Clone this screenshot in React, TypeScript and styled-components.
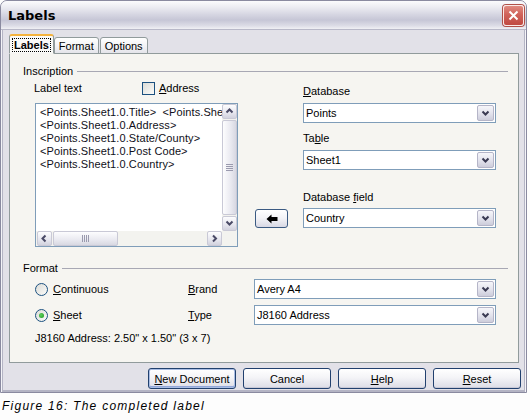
import React from 'react'
import styled, { createGlobalStyle } from 'styled-components'

const GlobalStyle = createGlobalStyle`
  body {
    margin: 0;
    background: #fdfdfd;
    font-family: "Liberation Sans", Arial, sans-serif;
    font-size: 11px;
    color: #000;
  }
`

const Window = styled.div`
  width: 527px;
  height: 393px;
  box-sizing: border-box;
  border: 1px solid #8a8aa0;
  border-radius: 7px 7px 0 0;
  background: #e2e1e8;
  box-shadow: inset 1px 0 0 #f4f4f8, inset 2px 0 0 #b4b4c4, inset -1px 0 0 #f4f4f8, inset -2px 0 0 #b4b4c4, inset 0 -2px 0 #b4b4c4;
  display: flex;
  flex-direction: column;
  overflow: hidden;
`

const TitleBar = styled.div`
  height: 28px;
  flex: none;
  display: flex;
  align-items: center;
  justify-content: space-between;
  padding: 0 2px 0 7px;
  background: linear-gradient(180deg, #fbfbfd 0%, #ececf2 22%, #d6d6e2 48%, #c6c6d6 68%, #dcdce6 88%, #f0f0f4 100%);
  border-bottom: 1px solid #b8b8c8;
`

const Title = styled.span`
  font-family: "DejaVu Sans", sans-serif;
  font-weight: bold;
  font-size: 13px;
  color: #000;
`

const CloseBtn = styled.div`
  width: 21px;
  height: 21px;
  box-sizing: border-box;
  border: 1px solid #fbe9e6;
  border-radius: 3px;
  background: linear-gradient(180deg, #e08a80 0%, #d0625a 45%, #c04a42 100%);
  display: flex;
  align-items: center;
  justify-content: center;
  box-shadow: 0 0 0 1px #b05048;
`

const Body = styled.div`
  flex: 1;
  display: flex;
  flex-direction: column;
  padding: 4px 7px 4px 8px;
`

const TabStrip = styled.div`
  display: flex;
  align-items: flex-end;
  height: 20px;
  margin-bottom: -1px;
  position: relative;
  z-index: 1;
`

const Tab = styled.div<{ $active?: boolean }>`
  box-sizing: border-box;
  height: ${p => (p.$active ? 20 : 17)}px;
  padding: 0 ${p => (p.$active ? 3 : 4)}px;
  margin-right: ${p => (p.$active ? 0 : 1)}px;
  display: flex;
  align-items: center;
  border: 1px solid #919b9c;
  border-bottom: ${p => (p.$active ? '1px solid #f6f5f2' : '1px solid #919b9c')};
  border-top: ${p => (p.$active ? '2px solid #f5b33c' : '1px solid #919b9c')};
  border-radius: 3px 3px 0 0;
  background: ${p => (p.$active ? '#fafaf8' : 'linear-gradient(180deg, #ffffff 0%, #f1f1f4 60%, #e4e4ea 100%)')};
  font-weight: ${p => (p.$active ? 'bold' : 'normal')};
`

const FocusText = styled.span`
  outline: 1px dotted #000;
  padding: 0 1px;
`

const TabPanel = styled.div`
  height: 310px;
  box-sizing: border-box;
  border: 1px solid #919b9c;
  background: #f6f5f1;
  padding: 10px 10px 0 13px;
`

const GroupHeader = styled.div`
  display: flex;
  align-items: center;
  gap: 4px;
  height: 14px;
  line-height: 14px;
`

const GroupLine = styled.div`
  flex: 1;
  height: 1px;
  background: #a8a8b4;
`

const Inscription = styled.div`
  display: flex;
  margin-top: 3px;
  padding-left: 12px;
`

const LeftCol = styled.div`
  width: 203px;
  display: flex;
  flex-direction: column;
`

const HeaderRow = styled.div`
  display: flex;
  align-items: center;
  height: 14px;
`

const FieldLabel = styled.span<{ $w?: number }>`
  display: inline-block;
  line-height: 14px;
  width: ${p => (p.$w ? `${p.$w}px` : 'auto')};
`

const CheckBox = styled.span`
  width: 13px;
  height: 13px;
  box-sizing: border-box;
  border: 1px solid #1c5180;
  background: linear-gradient(135deg, #dcdcd7 0%, #fbfbf9 100%);
  margin-right: 4px;
`

const TextBox = styled.div`
  margin-top: 8px;
  width: 203px;
  height: 144px;
  box-sizing: border-box;
  border: 1px solid #7f9db9;
  background: #fff;
  display: grid;
  grid-template-columns: 186px 15px;
  grid-template-rows: 1fr 15px;
`

const TextLines = styled.div`
  padding: 2px 0 0 4px;
  overflow: hidden;
  white-space: pre;
  line-height: 13px;
  letter-spacing: 0.1px;
  color: #101020;
`

const VScroll = styled.div`
  display: flex;
  flex-direction: column;
  background: #f3f3ef;
`

const HScroll = styled.div`
  display: flex;
  background: #f3f3ef;
  padding-left: 1px;
`

const Corner = styled.div`
  background: #f3f3ef;
`

const ScrollBtn = styled.div`
  width: 15px;
  height: 15px;
  flex: none;
  box-sizing: border-box;
  border: 1px solid #c9c9d6;
  border-radius: 2px;
  background: linear-gradient(180deg, #fdfdfe 0%, #e6e6ee 60%, #d2d2de 100%);
  display: flex;
  align-items: center;
  justify-content: center;
`

const Thumb = styled.div<{ $horizontal?: boolean }>`
  box-sizing: border-box;
  border: 1px solid #c9c9d6;
  border-radius: 2px;
  background: ${p =>
    p.$horizontal
      ? 'linear-gradient(180deg, #fdfdfe 0%, #e9e9f0 60%, #d8d8e2 100%)'
      : 'linear-gradient(90deg, #fdfdfe 0%, #e9e9f0 60%, #d8d8e2 100%)'};
  display: flex;
  align-items: center;
  justify-content: center;
  ${p => (p.$horizontal ? 'width: 65px; margin: 0 1px;' : 'flex: 1; margin: 1px 0;')}
`

const Grip = styled.div<{ $horizontal?: boolean }>`
  width: 7px;
  height: 7px;
  background: ${p =>
    p.$horizontal
      ? 'repeating-linear-gradient(90deg, #9a9aae 0 1px, transparent 1px 2px)'
      : 'repeating-linear-gradient(180deg, #9a9aae 0 1px, transparent 1px 2px)'};
`

const Spacer = styled.div`
  flex: 1;
`

const MiddleCol = styled.div`
  width: 33px;
  margin-left: 17px;
  padding-top: 128px;
`

const ArrowBtn = styled.div`
  width: 33px;
  height: 19px;
  box-sizing: border-box;
  border: 1px solid #3b5a82;
  border-radius: 3px;
  background: linear-gradient(180deg, #ffffff 0%, #f2f2f6 50%, #d8d8e4 100%);
  display: flex;
  align-items: center;
  justify-content: center;
`

const RightCol = styled.div`
  width: 193px;
  margin-left: 15px;
  padding-top: 3px;
  display: flex;
  flex-direction: column;
`

const Select = styled.div<{ $mt?: number }>`
  margin-top: ${p => p.$mt ?? 0}px;
  height: 20px;
  box-sizing: border-box;
  border: 1px solid #7f9db9;
  background: #fff;
  display: flex;
  align-items: center;
  padding: 0 1px 0 2px;
`

const SelectText = styled.span`
  flex: 1;
  white-space: nowrap;
`

const DropBtn = styled.div`
  width: 17px;
  height: 16px;
  box-sizing: border-box;
  border: 1px solid #b5b5c8;
  border-radius: 2px;
  background: linear-gradient(180deg, #f6f6fa 0%, #e2e2ec 55%, #cdcddb 100%);
  display: flex;
  align-items: center;
  justify-content: center;
`

const Spaced = styled.div<{ $mt: number }>`
  margin-top: ${p => p.$mt}px;
`

const FormatGrid = styled.div`
  margin-top: 4px;
  padding-left: 12px;
  display: grid;
  grid-template-columns: 153px 66px 242px;
  grid-auto-rows: 20px;
  row-gap: 6px;
  align-items: center;
`

const RadioRow = styled.div`
  display: flex;
  align-items: center;
  gap: 5px;
`

const Radio = styled.span<{ $checked?: boolean }>`
  width: 13px;
  height: 13px;
  box-sizing: border-box;
  border-radius: 50%;
  border: 1px solid #1c5180;
  background: linear-gradient(135deg, #dcdcd7 0%, #fbfbf9 100%);
  display: flex;
  align-items: center;
  justify-content: center;
  &::after {
    content: '';
    display: ${p => (p.$checked ? 'block' : 'none')};
    width: 5px;
    height: 5px;
    border-radius: 50%;
    background: radial-gradient(circle at 40% 40%, #5ed05e, #1f961f);
  }
`

const Info = styled.div`
  margin-top: 6px;
  padding-left: 12px;
  line-height: 14px;
`

const ButtonRow = styled.div`
  display: flex;
  justify-content: flex-end;
  gap: 7px;
  margin-top: 5px;
  margin-right: -2px;
`

const Button = styled.div<{ $default?: boolean }>`
  width: 88px;
  height: 21px;
  box-sizing: border-box;
  border: 1px solid #21406e;
  border-radius: 3px;
  background: linear-gradient(180deg, #ffffff 0%, #f4f4f7 45%, #dcdce6 100%);
  box-shadow: ${p => (p.$default ? 'inset 0 0 0 1px #a9bde4, inset 0 -1px 0 1px #92a6d8' : 'inset 0 -1px 0 #c9c9d6')};
  display: flex;
  align-items: center;
  justify-content: center;
`

const Caption = styled.div`
  margin-top: 6px;
  padding-left: 2px;
  font-family: "Liberation Sans", Arial, sans-serif;
  font-style: italic;
  font-size: 12px;
  letter-spacing: 1.25px;
  line-height: 14px;
  color: #000;
`

const U = ({ children }: { children: React.ReactNode }) => <u>{children}</u>

const Chevron = ({ dir }: { dir: 'up' | 'down' | 'left' | 'right' }) => {
  const pts = {
    up: '1.5,5.5 4.5,2.5 7.5,5.5',
    down: '1.5,2.5 4.5,5.5 7.5,2.5',
    left: '5.5,1.5 2.5,4.5 5.5,7.5',
    right: '3,1.5 6,4.5 3,7.5',
  }[dir]
  return (
    <svg width="9" height="9" viewBox="0 0 9 9">
      <polyline points={pts} fill="none" stroke="#4a4a66" strokeWidth="2" />
    </svg>
  )
}

const Combo = ({ value, mt }: { value: string; mt?: number }) => (
  <Select $mt={mt}>
    <SelectText>{value}</SelectText>
    <DropBtn>
      <svg width="9" height="7" viewBox="0 0 9 7">
        <polyline points="1.5,1.5 4.5,4.5 7.5,1.5" fill="none" stroke="#3a3a52" strokeWidth="2" />
      </svg>
    </DropBtn>
  </Select>
)

const lines = [
  '<Points.Sheet1.0.Title>  <Points.Sheet1.0.Name>',
  '<Points.Sheet1.0.Address>',
  '<Points.Sheet1.0.State/County>',
  '<Points.Sheet1.0.Post Code>',
  '<Points.Sheet1.0.Country>',
]

export default function App() {
  return (
    <>
      <GlobalStyle />
      <Window>
        <TitleBar>
          <Title>Labels</Title>
          <CloseBtn>
            <svg width="11" height="11" viewBox="0 0 11 11">
              <path d="M1.5 1.5 L9.5 9.5 M9.5 1.5 L1.5 9.5" stroke="#fff" strokeWidth="2" />
            </svg>
          </CloseBtn>
        </TitleBar>
        <Body>
          <TabStrip>
            <Tab $active>
              <FocusText>Labels</FocusText>
            </Tab>
            <Tab>Format</Tab>
            <Tab>Options</Tab>
          </TabStrip>
          <TabPanel>
            <GroupHeader>
              Inscription
              <GroupLine />
            </GroupHeader>
            <Inscription>
              <LeftCol>
                <HeaderRow>
                  <FieldLabel $w={108} style={{ marginLeft: -1 }}>Label text</FieldLabel>
                  <CheckBox />
                  <FieldLabel>
                    <U>A</U>ddress
                  </FieldLabel>
                </HeaderRow>
                <TextBox>
                  <TextLines>{lines.join('\n')}</TextLines>
                  <VScroll>
                    <ScrollBtn>
                      <Chevron dir="up" />
                    </ScrollBtn>
                    <Thumb>
                      <Grip />
                    </Thumb>
                    <ScrollBtn>
                      <Chevron dir="down" />
                    </ScrollBtn>
                  </VScroll>
                  <HScroll>
                    <ScrollBtn>
                      <Chevron dir="left" />
                    </ScrollBtn>
                    <Thumb $horizontal>
                      <Grip $horizontal />
                    </Thumb>
                    <Spacer />
                    <ScrollBtn>
                      <Chevron dir="right" />
                    </ScrollBtn>
                  </HScroll>
                  <Corner />
                </TextBox>
              </LeftCol>
              <MiddleCol>
                <ArrowBtn>
                  <svg width="12" height="10" viewBox="0 0 12 10">
                    <path d="M0.5 5 L5.5 0.5 L5.5 3 L11.5 3 L11.5 7 L5.5 7 L5.5 9.5 Z" fill="#000" />
                  </svg>
                </ArrowBtn>
              </MiddleCol>
              <RightCol>
                <FieldLabel>
                  <U>D</U>atabase
                </FieldLabel>
                <Combo value="Points" mt={5} />
                <Spaced $mt={8}>
                  <FieldLabel>
                    Ta<U>b</U>le
                  </FieldLabel>
                </Spaced>
                <Combo value="Sheet1" mt={5} />
                <Spaced $mt={20}>
                  <FieldLabel>
                    Database <U>f</U>ield
                  </FieldLabel>
                </Spaced>
                <Combo value="Country" mt={4} />
              </RightCol>
            </Inscription>
            <Spaced $mt={14}>
              <GroupHeader>
                Format
                <GroupLine />
              </GroupHeader>
            </Spaced>
            <FormatGrid>
              <RadioRow>
                <Radio />
                <span>
                  <U>C</U>ontinuous
                </span>
              </RadioRow>
              <span>
                <U>B</U>rand
              </span>
              <Combo value="Avery A4" />
              <RadioRow>
                <Radio $checked />
                <span>
                  <U>S</U>heet
                </span>
              </RadioRow>
              <span>
                <U>T</U>ype
              </span>
              <Combo value="J8160 Address" />
            </FormatGrid>
            <Info>J8160 Address: 2.50" x 1.50" (3 x 7)</Info>
          </TabPanel>
          <ButtonRow>
            <Button $default>
              <span>
                <U>N</U>ew Document
              </span>
            </Button>
            <Button>Cancel</Button>
            <Button>
              <span>
                <U>H</U>elp
              </span>
            </Button>
            <Button>
              <span>
                <U>R</U>eset
              </span>
            </Button>
          </ButtonRow>
        </Body>
      </Window>
      <Caption>Figure 16: The completed label</Caption>
    </>
  )
}
